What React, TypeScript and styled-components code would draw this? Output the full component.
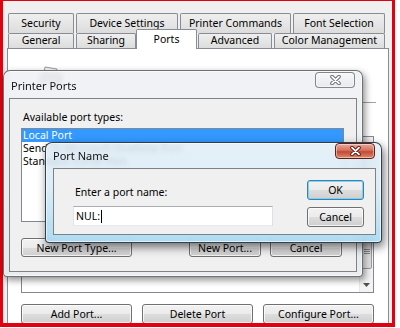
import React from 'react';
import styled, { createGlobalStyle } from 'styled-components';

const GlobalStyle = createGlobalStyle`
  html, body { margin: 0; padding: 0; background: #ffffff; }
  body {
    font-family: "Noto Sans", "Liberation Sans", Arial, sans-serif;
    font-size: 10px;
    color: #000;
  }
  #root { width: 400px; height: 328px; overflow: hidden; }
`;

const Screen = styled.div`
  position: relative;
  width: 400px;
  height: 328px;
  background: #ffffff;
  overflow: hidden;
`;

const Capture = styled.div`
  box-sizing: border-box;
  width: 395px;
  height: 327px;
  border-style: solid;
  border-color: #e3000f;
  border-width: 1px 3px 4px 3px;
  background: #f0f0f0;
  padding: 12px 0 0 4px;
  overflow: hidden;
`;

const TabRow = styled.div<{ $h: number }>`
  display: flex;
  align-items: flex-end;
  height: ${(p) => p.$h}px;
  margin-left: 1px;
`;

const Tab = styled.div<{ $w: number; $gap?: number; $active?: boolean; $h: number }>`
  box-sizing: border-box;
  position: relative;
  z-index: ${(p) => (p.$active ? 2 : 1)};
  width: ${(p) => p.$w}px;
  height: ${(p) => p.$h}px;
  margin-left: ${(p) => p.$gap ?? 0}px;
  margin-bottom: ${(p) => (p.$active ? -1 : 0)}px;
  border: 1px solid #898c95;
  border-bottom: none;
  border-radius: 2px 2px 0 0;
  background: ${(p) => (p.$active ? '#ffffff' : 'linear-gradient(#efefef, #dcdcdc)')};
  text-align: center;
  white-space: nowrap;
  line-height: ${(p) => (p.$active ? 14 : p.$h - 2)}px;
  padding-top: ${(p) => (p.$active ? 2 : 0)}px;
  font-size: 10.5px;
`;

const Panel = styled.div`
  box-sizing: border-box;
  width: 382px;
  height: 300px;
  border: 1px solid #898c95;
  background: #ffffff;
  display: flex;
  flex-direction: column;
`;

const PrinterHeader = styled.div`
  display: flex;
  align-items: center;
  gap: 8px;
  height: 30px;
  margin: 14px 0 0 30px;
  color: #9a9a9a;
  font-size: 11px;
`;

const Separator = styled.div`
  height: 1px;
  width: 355px;
  margin: 9px 0 0 13px;
  background: #a0a0a0;
`;

const ListView = styled.div`
  box-sizing: border-box;
  display: flex;
  width: 353px;
  height: 157px;
  margin: 33px 0 0 13px;
  border: 1px solid #828790;
  background: #fff;
`;

const ListBody = styled.div`
  flex: 1;
`;

const ScrollBar = styled.div`
  width: 13px;
  display: flex;
  flex-direction: column;
  background: #f3f3f3;
  border-left: 1px solid #e8e8e8;
`;

const ScrollTrack = styled.div`
  flex: 1;
  display: flex;
  flex-direction: column;
  justify-content: flex-end;
  padding-bottom: 8px;
`;

const ScrollThumb = styled.div`
  box-sizing: border-box;
  height: 36px;
  margin: 0 1px;
  border: 1px solid #9a9a9a;
  border-radius: 2px;
  background: linear-gradient(90deg, #f4f4f4, #dcdcdc);
  display: flex;
  align-items: center;
  justify-content: center;
`;

const ScrollArrow = styled.div`
  height: 15px;
  display: flex;
  align-items: center;
  justify-content: center;
`;

const ButtonRow = styled.div<{ $gap: number; $w?: number }>`
  display: flex;
  gap: ${(p) => p.$gap}px;
  ${(p) => (p.$w ? `width: ${p.$w}px;` : '')}
`;

const PageButtons = styled(ButtonRow)`
  margin: 11px 0 0 13px;
`;

const Button = styled.div<{ $w: number; $h?: number; $default?: boolean; $push?: boolean }>`
  box-sizing: border-box;
  width: ${(p) => p.$w}px;
  height: ${(p) => p.$h ?? 20}px;
  ${(p) => (p.$push ? 'margin-left: auto;' : '')}
  border: 1px solid ${(p) => (p.$default ? '#3c7fb1' : '#707070')};
  border-radius: 3px;
  background: linear-gradient(#f2f2f2 0%, #ebebeb 50%, #dddddd 51%, #cfcfcf 100%);
  box-shadow: inset 0 0 0 1px ${(p) => (p.$default ? 'rgba(110, 210, 245, 0.9)' : 'rgba(255,255,255,0.75)')};
  display: flex;
  align-items: center;
  justify-content: center;
  font-size: 10.5px;
  white-space: nowrap;
  color: #000;
`;

/* ---------- Windows ---------- */

const Window = styled.div<{ $x: number; $y: number; $w: number; $h: number; $active?: boolean }>`
  position: absolute;
  left: ${(p) => p.$x}px;
  top: ${(p) => p.$y}px;
  width: ${(p) => p.$w}px;
  height: ${(p) => p.$h}px;
  box-sizing: border-box;
  display: flex;
  flex-direction: column;
  border: 1px solid ${(p) => (p.$active ? 'rgba(30, 45, 60, 0.9)' : 'rgba(70, 70, 70, 0.75)')};
  border-radius: 7px 7px 4px 4px;
  background: ${(p) =>
    p.$active
      ? 'linear-gradient(180deg, rgba(226,238,246,0.86) 0%, rgba(214,234,246,0.86) 45%, rgba(168,218,242,0.92) 100%)'
      : 'linear-gradient(180deg, rgba(238,241,244,0.84) 0%, rgba(229,234,238,0.84) 100%)'};
  backdrop-filter: blur(2.5px);
  box-shadow: inset 0 0 0 1px rgba(255, 255, 255, 0.6),
    ${(p) => (p.$active ? '2px 4px 10px rgba(0,0,0,0.55)' : '2px 3px 7px rgba(0,0,0,0.45)')};
`;

const TitleBar = styled.div<{ $h: number }>`
  height: ${(p) => p.$h}px;
  display: flex;
  justify-content: space-between;
  align-items: flex-start;
  padding-left: 7px;
`;

const Title = styled.div<{ $h: number }>`
  line-height: ${(p) => p.$h}px;
  font-size: 11px;
  color: #111;
`;

const CloseButton = styled.div<{ $active?: boolean; $mt: number; $mr: number }>`
  box-sizing: border-box;
  width: 40px;
  height: 16px;
  margin-top: ${(p) => p.$mt}px;
  margin-right: ${(p) => p.$mr}px;
  border: 1px solid ${(p) => (p.$active ? '#5a2119' : 'rgba(90,90,90,0.7)')};
  border-radius: 4px;
  background: ${(p) =>
    p.$active
      ? 'linear-gradient(180deg, #e8aa9c 0%, #d6705e 45%, #c44a33 55%, #d98a6e 100%)'
      : 'linear-gradient(180deg, rgba(250,250,250,0.6), rgba(225,230,234,0.6))'};
  box-shadow: inset 0 0 0 1px rgba(255,255,255,0.45);
  display: flex;
  align-items: center;
  justify-content: center;
`;

const Client = styled.div<{ $m: string; $h: number }>`
  box-sizing: border-box;
  margin: ${(p) => p.$m};
  height: ${(p) => p.$h}px;
  border: 1px solid #7e8286;
  background: #f0f0f0;
`;

const PortsClient = styled(Client)`
  padding: 12px 0 0 11px;
  display: flex;
  flex-direction: column;
`;

const Label = styled.div`
  line-height: 13px;
  height: 13px;
  padding-left: 2px;
  font-size: 10.5px;
`;

const ListBox = styled.div`
  box-sizing: border-box;
  width: 323px;
  height: 94px;
  margin-top: 4px;
  border: 1px solid #828790;
  background: #fff;
`;

const ListItem = styled.div<{ $selected?: boolean }>`
  height: 13px;
  line-height: 13px;
  padding-left: 1px;
  font-size: 10.5px;
  white-space: nowrap;
  background: ${(p) => (p.$selected ? '#3399ff' : 'transparent')};
  color: ${(p) => (p.$selected ? '#ffffff' : '#000')};
`;

const DialogButtons = styled(ButtonRow)`
  margin-top: 16px;
`;

const NameClient = styled(Client)`
  display: flex;
  justify-content: space-between;
  padding: 11px 11px 0 19px;
`;

const Column = styled.div<{ $gap: number; $mt?: number }>`
  display: flex;
  flex-direction: column;
  gap: ${(p) => p.$gap}px;
  margin-top: ${(p) => p.$mt ?? 0}px;
`;

const TextBox = styled.div`
  box-sizing: border-box;
  width: 200px;
  height: 20px;
  border: 1px solid #abadb3;
  border-color: #abadb3 #dbdfe6 #e3e9ef #e2e3ea;
  background: #fff;
  display: flex;
  align-items: center;
  padding-left: 2px;
  font-size: 10.5px;
`;

const Caret = styled.span`
  display: inline-block;
  width: 1px;
  height: 13px;
  background: #000;
  margin-left: 1px;
`;

const CloseGlyph: React.FC<{ outline: string }> = ({ outline }) => (
  <svg width="13" height="10" viewBox="0 0 13 10">
    <path d="M3 1.6 L10 8.4 M10 1.6 L3 8.4" stroke={outline} strokeWidth="3.6" strokeLinecap="round" fill="none" />
    <path d="M3 1.6 L10 8.4 M10 1.6 L3 8.4" stroke="#ffffff" strokeWidth="1.8" strokeLinecap="round" fill="none" />
  </svg>
);

const PrinterIcon: React.FC = () => (
  <svg width="26" height="26" viewBox="0 0 26 26">
    <path d="M7 2 L19 4 L18 10 L6 8 Z" fill="#f4f4f4" stroke="#9a9a9a" />
    <rect x="2" y="9" width="22" height="10" rx="2" fill="#b8bcc2" stroke="#808488" />
    <rect x="5" y="17" width="16" height="6" fill="#f8f8f8" stroke="#9a9a9a" />
  </svg>
);

export default function App() {
  return (
    <Screen>
      <GlobalStyle />
      <Capture>
        <TabRow $h={20}>
          <Tab $w={66} $h={20}>Security</Tab>
          <Tab $w={102} $h={20} $gap={2}>Device Settings</Tab>
          <Tab $w={111} $h={20} $gap={2}>Printer Commands</Tab>
          <Tab $w={92} $h={20} $gap={2}>Font Selection</Tab>
        </TabRow>
        <TabRow $h={15}>
          <Tab $w={66} $h={15}>General</Tab>
          <Tab $w={60} $h={15} $gap={2}>Sharing</Tab>
          <Tab $w={61} $h={20} $active>Ports</Tab>
          <Tab $w={74} $h={15} $gap={1}>Advanced</Tab>
          <Tab $w={111} $h={15} $gap={2}>Color Management</Tab>
        </TabRow>
        <Panel>
          <PrinterHeader>
            <PrinterIcon />
          </PrinterHeader>
          <Separator />
          <ListView>
            <ListBody />
            <ScrollBar>
              <ScrollTrack>
                <ScrollThumb>
                  <svg width="6" height="6" viewBox="0 0 6 6">
                    <path d="M0 1.5 H6 M0 3.5 H6 M0 5.5 H6" stroke="#8a8a8a" strokeWidth="1" />
                  </svg>
                </ScrollThumb>
              </ScrollTrack>
              <ScrollArrow>
                <svg width="7" height="4" viewBox="0 0 7 4">
                  <path d="M0 0 H7 L3.5 4 Z" fill="#505050" />
                </svg>
              </ScrollArrow>
            </ScrollBar>
          </ListView>
          <PageButtons $gap={10}>
            <Button $w={111}>Add Port...</Button>
            <Button $w={111}>Delete Port</Button>
            <Button $w={111}>Configure Port...</Button>
          </PageButtons>
        </Panel>
      </Capture>

      <Window $x={3} $y={70} $w={360} $h={207}>
        <TitleBar $h={27}>
          <Title $h={29}>Printer Ports</Title>
          <CloseButton $mt={1} $mr={7}>
            <CloseGlyph outline="#6b6b6b" />
          </CloseButton>
        </TitleBar>
        <PortsClient $m="0 5px 4px 5px" $h={174}>
          <Label>Available port types:</Label>
          <ListBox>
            <ListItem $selected>Local Port</ListItem>
            <ListItem>Send To Microsoft OneNote Port</ListItem>
            <ListItem>Standard TCP/IP Port</ListItem>
          </ListBox>
          <DialogButtons $gap={9} $w={321}>
            <Button $w={111} $h={19}>New Port Type...</Button>
            <Button $w={72} $h={19} $push>New Port...</Button>
            <Button $w={72} $h={19}>Cancel</Button>
          </DialogButtons>
        </PortsClient>
      </Window>

      <Window $x={45} $y={142} $w={337} $h={101} $active>
        <TitleBar $h={25}>
          <Title $h={26}>Port Name</Title>
          <CloseButton $active $mt={0} $mr={6}>
            <CloseGlyph outline="#5a1d14" />
          </CloseButton>
        </TitleBar>
        <NameClient $m="0 5px 7px 7px" $h={67}>
          <Column $gap={7} $mt={6}>
            <Label>Enter a port name:</Label>
            <TextBox>
              NUL:<Caret />
            </TextBox>
          </Column>
          <Column $gap={7}>
            <Button $w={57} $h={20} $default>OK</Button>
            <Button $w={57} $h={20}>Cancel</Button>
          </Column>
        </NameClient>
      </Window>
    </Screen>
  );
}
